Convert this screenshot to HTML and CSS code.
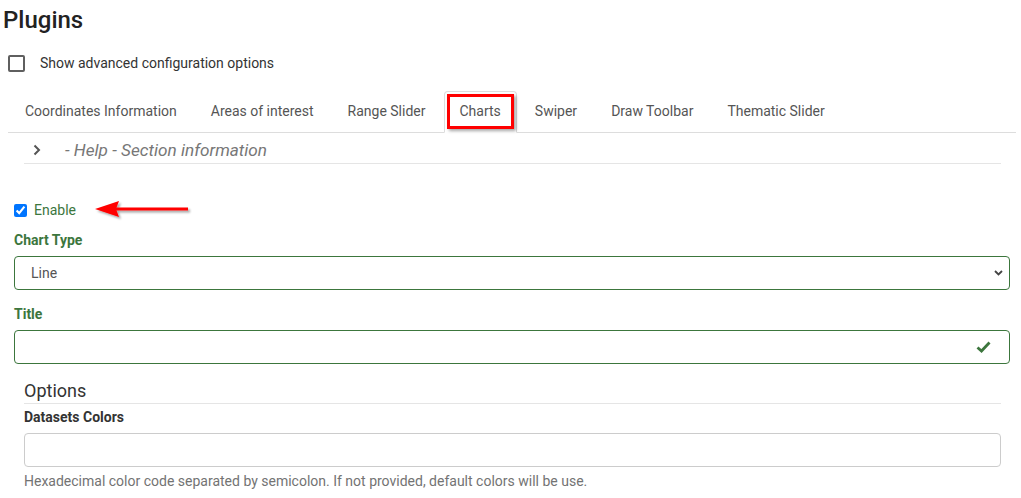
FILE: index.html
```html
<!DOCTYPE html>
<html>
<head>
<meta charset="utf-8">
<link rel="stylesheet" href="styles.css">
</head>
<body>
<div class="page">
  <h1 class="title">Plugins</h1>
  <label class="adv"><span class="box"></span><span>Show advanced configuration options</span></label>
  <ul class="tabs">
    <li><a>Coordinates Information</a></li>
    <li><a>Areas of interest</a></li>
    <li><a>Range Slider</a></li>
    <li class="active"><a>Charts<span class="mark"></span></a></li>
    <li><a>Swiper</a></li>
    <li><a>Draw Toolbar</a></li>
    <li><a>Thematic Slider</a></li>
  </ul>
  <div class="pane">
    <div class="help">
      <svg class="chev" width="8" height="12" viewBox="0 0 8 12"><path d="M1.5 1.5 L6 6 L1.5 10.5" fill="none" stroke="#555" stroke-width="2"/></svg>
      <span>- Help - Section information</span>
    </div>
    <div class="enable">
      <input type="checkbox" checked>
      <span class="enable-text">Enable</span>
      <svg class="arrow" width="100" height="22" viewBox="0 0 100 22">
        <defs><filter id="sh" x="-10%" y="-40%" width="130%" height="200%"><feDropShadow dx="2" dy="2" stdDeviation="1.2" flood-color="#000" flood-opacity="0.35"/></filter></defs>
        <g filter="url(#sh)" fill="#ff0000">
          <polygon points="0,10 24,2 21,10 24,18"/>
          <rect x="20" y="8.5" width="73" height="3"/>
        </g>
      </svg>
    </div>
    <div class="group ok">
      <label class="lbl">Chart Type</label>
      <div class="control">
        <span class="val">Line</span>
        <svg class="sel-chev" width="9" height="6" viewBox="0 0 9 6"><path d="M1 1 L4.5 4.5 L8 1" fill="none" stroke="#444" stroke-width="1.8"/></svg>
      </div>
    </div>
    <div class="group ok">
      <label class="lbl">Title</label>
      <div class="control check">
        <input class="field" type="text">
        <svg class="ok-ico" width="15" height="12" viewBox="0 0 15 12"><path d="M1.5 6.5 L5.5 10 L13.5 1.5" fill="none" stroke="#3c763d" stroke-width="2.8"/></svg>
      </div>
    </div>
    <div class="options">
      <div class="legend">Options</div>
      <div class="group">
        <label class="lbl">Datasets Colors</label>
        <div class="control plain"><input class="field" type="text"></div>
        <p class="hint">Hexadecimal color code separated by semicolon. If not provided, default colors will be use.</p>
      </div>
    </div>
  </div>
</div>
</body>
</html>
```
FILE: styles.css
```css
* { box-sizing: border-box; }
body {
  margin: 0;
  background: #fff;
  color: #333;
  font-family: Roboto, "Liberation Sans", sans-serif;
  font-size: 14px;
  line-height: 20px;
}
.page { padding: 0 5px 0 8px; }
.title {
  margin: 6px 0 0 -5px;
  font-size: 24px;
  line-height: 28px;
  font-weight: 500;
  color: #222;
}
.adv {
  display: flex;
  align-items: center;
  gap: 15px;
  margin-top: 19px;
  height: 20px;
  color: #333;
}
.box {
  width: 17px;
  height: 17px;
  border: 2px solid #5f5f5f;
  border-radius: 2px;
}
.tabs {
  display: flex;
  list-style: none;
  margin: 18px 0 0;
  padding: 0 0 0 1px;
  border-bottom: 1px solid #ddd;
}
.tabs li { margin-bottom: -1px; }
.tabs a {
  display: block;
  position: relative;
  padding: 9px 15px 11px;
  margin-right: 2px;
  border: 1px solid transparent;
  border-radius: 4px 4px 0 0;
  color: #555;
  line-height: 20px;
}
.tabs .active a {
  background: #fff;
  border-color: #ddd #ddd transparent;
}
.mark {
  position: absolute;
  left: 2px;
  right: 2px;
  top: 2px;
  bottom: 3px;
  border: 3px solid #ff0000;
  box-shadow: 2px 2px 3px rgba(0, 0, 0, 0.35);
}
.pane { padding: 0 6px; }
.help {
  display: flex;
  align-items: center;
  gap: 24px;
  height: 27px;
  margin: 4px 9px 0 10px;
  padding-left: 9px;
  border-bottom: 1px solid #e5e5e5;
  color: #777;
  font-size: 17.2px;
  font-style: italic;
}
.enable {
  display: flex;
  align-items: center;
  height: 20px;
  margin-top: 36px;
}
.enable input {
  width: 13px;
  height: 13px;
  margin: 0;
}
.enable-text {
  margin-left: 7px;
  color: #3c763d;
}
.arrow { margin-left: 19px; }
.group { margin-top: 10px; margin-bottom: 14px; }
.group + .group { margin-top: 0; }
.lbl {
  display: block;
  margin-bottom: 6px;
  font-weight: 700;
  color: #333;
}
.ok .lbl { color: #3c763d; }
.control {
  display: flex;
  align-items: center;
  height: 34px;
  border: 1px solid #ccc;
  border-radius: 4px;
  padding: 0 6px 0 16px;
}
.ok .control { border-color: #3c763d; }
.val { flex: 1; color: #555; }
.check { padding-right: 18px; }
.field {
  flex: 1;
  min-width: 0;
  border: 0;
  outline: 0;
  height: 30px;
  padding: 0;
  font: inherit;
  background: transparent;
}
.options { margin: 0 9px 0 10px; }
.legend {
  font-size: 18px;
  line-height: 25px;
  color: #333;
  border-bottom: 1px solid #e5e5e5;
  margin-bottom: 3px;
}
.options .group { margin-top: 0; }
.plain { padding-right: 12px; }
.hint {
  margin: 4px 0 0;
  color: #737373;
}
```
